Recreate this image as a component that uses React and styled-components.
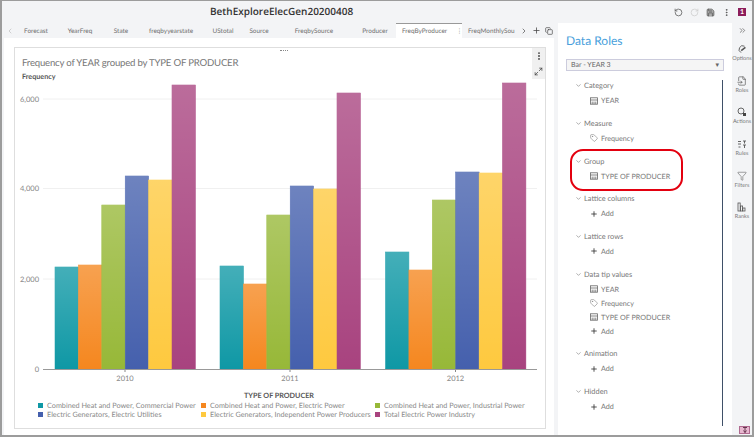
import React from 'react';
import styled, { createGlobalStyle } from 'styled-components';
import { ChevronLeft, ChevronRight, ChevronDown, ChevronsRight, Plus, Copy, RotateCcw, RotateCw, Save, MoreVertical, Maximize2, Tag, FileInput, Filter } from 'lucide-react';

const GlobalStyle = createGlobalStyle`
  html, body { margin: 0; padding: 0; background: #fff; }
  body { font-family: Lato, "Open Sans", sans-serif; color: #6b6b6b; text-rendering: geometricPrecision; }
`;

const Frame = styled.div`
  box-sizing: border-box;
  width: 754px;
  height: 437px;
  border: solid #9c9c9c;
  border-width: 1px 2px 2px 2px;
  background: #f3f4f6;
  display: flex;
  flex-direction: column;
  overflow: hidden;
`;

const Header = styled.header`
  height: 22px;
  flex: none;
  position: relative;
  display: flex;
  align-items: center;
  justify-content: flex-end;
  padding-right: 6px;
  gap: 7px;
  color: #555;
`;

const DocTitle = styled.div`
  position: absolute;
  left: 208px;
  top: 3px;
  font: 600 10px/14px "Open Sans", sans-serif;
  color: #333;
`;

const Badge = styled.span`
  width: 8px;
  height: 8px;
  background: #8c1d5b;
  color: #fff;
  font: 700 7px/8px Lato, sans-serif;
  text-align: center;
`;

const Body = styled.div`
  flex: 1;
  display: flex;
  min-height: 0;
`;

const Workspace = styled.div`
  width: 556px;
  flex: none;
  display: flex;
  flex-direction: column;
`;

const TabBar = styled.div`
  height: 15px;
  flex: none;
  display: flex;
  align-items: stretch;
  padding-left: 4px;
  font-size: 6.4px;
  color: #6e6e6e;
`;

const TabArrow = styled.span`
  display: flex;
  align-items: center;
  justify-content: flex-end;
  width: 8px;
  color: #bbb;
`;

const Tab = styled.div`
  display: flex;
  align-items: center;
  justify-content: center;
  flex: none;
  width: ${p => p.$w}px;
  white-space: nowrap;
  box-sizing: border-box;
  background: ${p => p.$active ? '#fff' : 'transparent'};
  border-top: ${p => p.$active ? '1px solid #999' : '1px solid transparent'};
  ${p => p.$active && 'justify-content: flex-start; padding-left: 6px; gap: 9px;'}
  ${p => p.$trailing && 'justify-content: flex-start; margin-left: 6px;'}
`;

const TabTools = styled.div`
  display: flex;
  align-items: center;
  gap: 4px;
  color: #444;
`;

const Canvas = styled.div`
  flex: 1;
  background: #fff;
  margin: 0 4px 0 2px;
  padding: 9px 8px 6px 10px;
  display: flex;
  min-height: 0;
`;

const Card = styled.section`
  flex: 1;
  box-sizing: border-box;
  border: 1px solid #dedede;
  position: relative;
  padding: 9px 0 0 7px;
  display: flex;
  flex-direction: column;
`;

const Grip = styled.span`
  position: absolute;
  top: 2px;
  left: 50%;
  width: 8px;
  border-top: 1px dotted #888;
`;

const CardTools = styled.div`
  position: absolute;
  right: 0;
  top: 0;
  width: 13px;
  height: 31px;
  background: #f0f0f0;
  display: flex;
  flex-direction: column;
  align-items: center;
  justify-content: space-around;
  color: #444;
`;

const ChartTitle = styled.div`
  font-size: 9.6px;
  letter-spacing: -0.2px;
  line-height: 13px;
  color: #777;
`;

const AxisTitle = styled.div`
  font-size: 7.2px;
  line-height: 10px;
  margin-top: 2px;
  font-weight: 700;
  color: #555;
`;

const Plot = styled.svg`
  display: block;
  margin-left: -7px;
  width: 530px;
  height: 309px;
  flex: none;
`;

const LegendTitle = styled.div`
  text-align: center;
  font-size: 7.2px;
  font-weight: 700;
  line-height: 10px;
  color: #555;
  padding-right: 9px;
`;

const Legend = styled.div`
  display: grid;
  grid-template-columns: 163px 174px auto;
  margin: 0 0 0 16px;
  font-size: 7.25px;
  line-height: 9px;
  color: #888;
`;

const LegendItem = styled.div`
  display: flex;
  align-items: center;
  gap: 4px;
  white-space: nowrap;
`;

const Swatch = styled.i`
  width: 5px;
  height: 5px;
  background: ${p => p.$c};
`;

const RolesPanel = styled.aside`
  width: 174px;
  flex: none;
  background: #fff;
  box-sizing: border-box;
  padding: 11px 8px 0 8px;
  position: relative;
`;

const PanelTitle = styled.h2`
  margin: 0;
  font-size: 12px;
  line-height: 14px;
  font-weight: 400;
  color: #4a9fdc;
`;

const Select = styled.div`
  margin-top: 11px;
  height: 12px;
  width: 158px;
  box-sizing: border-box;
  border: 1px solid #ccd;
  background: #f5f5f5;
  padding: 0 4px;
  font-size: 7px;
  line-height: 10px;
  display: flex;
  justify-content: space-between;
  color: #666;
`;

const Roles = styled.div`
  margin-top: 7px;
  display: flex;
  flex-direction: column;
  gap: 8px;
`;

const Section = styled.div`
  position: relative;
  ${p => p.$marked && `
    &::after {
      content: '';
      position: absolute;
      left: 4px;
      top: -4px;
      width: 113px;
      height: 42px;
      box-sizing: border-box;
      border: 2px solid #e3000f;
      border-radius: 13px;
    }
  `}
`;

const SectionHead = styled.div`
  display: flex;
  align-items: center;
  height: 15.7px;
  gap: 2px;
  padding-left: 9px;
  font-size: 7.4px;
  color: #777;
`;

const RoleRow = styled.div`
  display: flex;
  align-items: center;
  height: 14px;
  gap: 3px;
  padding-left: 24px;
  font-size: 7.2px;
  color: #777;
`;

const ScrollThumb = styled.div`
  position: absolute;
  right: 9px;
  top: 57px;
  bottom: 9px;
  width: 1px;
  background: #3f5068;
`;

const Rail = styled.nav`
  flex: 1;
  display: flex;
  flex-direction: column;
  align-items: center;
  position: relative;
  padding-top: 1px;
`;

const RailToggle = styled.div`
  height: 12px;
  display: flex;
  align-items: center;
  margin-bottom: 2px;
`;

const RailItem = styled.div`
  width: 100%;
  height: 31.6px;
  display: flex;
  flex-direction: column;
  align-items: center;
  justify-content: center;
  gap: 2px;
  font-size: 5.5px;
  line-height: 7px;
  color: #777;
`;

const PinButton = styled.span`
  position: absolute;
  right: 2px;
  bottom: 1px;
  width: 11px;
  height: 8px;
  background: #e8b8d0;
  border: 1px solid #b06a90;
  box-sizing: border-box;
  display: flex;
  align-items: center;
  justify-content: center;
`;

const tabs = [
  ['Forecast', 44], ['YearFreq', 44], ['State', 38], ['freqbyyearstate', 62],
  ['UStotal', 42], ['Source', 30], ['FreqbySource', 80], ['Producer', 42],
];

const colors = ['#0f98a5', '#f5871f', '#97b838', '#4560ad', '#fec93f', '#a8437f'];
const groups = [
  { label: '2010', x: 55, tops: [268, 266, 206, 177, 181, 86] },
  { label: '2011', x: 220, tops: [267, 285, 216, 187, 190, 94] },
  { label: '2012', x: 385.5, tops: [253, 271, 201, 173, 174, 84] },
];
const ticks = [['6,000', 100], ['4,000', 189.5], ['2,000', 280], ['0', 370]];

const legend = [
  ['Combined Heat and Power, Commercial Power', colors[0]],
  ['Combined Heat and Power, Electric Power', colors[1]],
  ['Combined Heat and Power, Industrial Power', colors[2]],
  ['Electric Generators, Electric Utilities', colors[3]],
  ['Electric Generators, Independent Power Producers', colors[4]],
  ['Total Electric Power Industry', colors[5]],
];

const sections = [
  { name: 'Category', rows: [['cat', 'YEAR']] },
  { name: 'Measure', rows: [['tag', 'Frequency']] },
  { name: 'Group', marked: true, rows: [['cat', 'TYPE OF PRODUCER']] },
  { name: 'Lattice columns', rows: [['add', 'Add']] },
  { name: 'Lattice rows', rows: [['add', 'Add']] },
  { name: 'Data tip values', rows: [['cat', 'YEAR'], ['tag', 'Frequency'], ['cat', 'TYPE OF PRODUCER'], ['add', 'Add']] },
  { name: 'Animation', rows: [['add', 'Add']] },
  { name: 'Hidden', rows: [['add', 'Add']] },
];

function OptionsIcon() {
  return (
    <svg width="10" height="10" viewBox="0 0 10 10" fill="none" stroke="#555" strokeWidth="0.9">
      <path d="M7.5 2.2A3.6 3.6 0 1 0 4 8.6" />
      <path d="M4.2 6.6L8.4 3.4" strokeWidth="1.6" />
    </svg>
  );
}

function ActionsIcon() {
  return (
    <svg width="10" height="10" viewBox="0 0 10 10" fill="none" stroke="#555" strokeWidth="0.9">
      <circle cx="4" cy="4" r="3" />
      <rect x="6" y="6" width="3" height="3" fill="#444" stroke="none" />
    </svg>
  );
}

function RulesIcon() {
  return (
    <svg width="10" height="10" viewBox="0 0 10 10" fill="none" stroke="#555" strokeWidth="0.9">
      <path d="M1 2.5H4M1 5H4M1.5 8H3.5M6 2H9M7.5 2V4.5M6 6H9M7.5 6V9" />
    </svg>
  );
}

function RanksIcon() {
  return (
    <svg width="10" height="10" viewBox="0 0 10 10" fill="none" stroke="#555" strokeWidth="0.8">
      <rect x="1" y="1" width="2.2" height="8" />
      <rect x="3.4" y="4" width="2.2" height="5" />
      <rect x="5.8" y="6" width="2.2" height="3" />
    </svg>
  );
}

const railItems = [
  ['Options', OptionsIcon],
  ['Roles', () => <FileInput size={10} strokeWidth={1.6} color="#555" />],
  ['Actions', ActionsIcon],
  ['Rules', RulesIcon],
  ['Filters', () => <Filter size={10} strokeWidth={1.3} color="#555" />],
  ['Ranks', RanksIcon],
];

function CategoryIcon() {
  return (
    <svg width="8" height="8" viewBox="0 0 8 8" fill="none" stroke="#666" strokeWidth="0.8">
      <rect x="0.5" y="0.8" width="7" height="6.4" />
      <path d="M0.5 3H7.5M2.2 7V4.6M4 7V4.6M5.8 7V4.6" />
    </svg>
  );
}

function RoleIcon({ kind }) {
  if (kind === 'cat') return <CategoryIcon />;
  if (kind === 'tag') return <Tag size={8} strokeWidth={1.5} color="#666" />;
  return <Plus size={8} strokeWidth={2.5} color="#333" />;
}

function Chart() {
  // the svg starts at the card's left edge, x 15 / y 83 of the page
  return (
    <Plot viewBox="15 83 530 309">
      <defs>
        <linearGradient id="fade" x1="0" y1="0" x2="0" y2="1">
          <stop offset="0" stopColor="#fff" stopOpacity="0.22" />
          <stop offset="1" stopColor="#fff" stopOpacity="0" />
        </linearGradient>
      </defs>
      {ticks.map(([t, y]) => (
        <g key={t}>
          {y !== 370 && <line x1="43" x2="537" y1={y} y2={y} stroke="#f0f0f0" />}
          <text x="39" y={y + 2.5} textAnchor="end" fontSize="7.5" fill="#888" fontFamily="Lato">{t}</text>
        </g>
      ))}
      {groups.map(g => (
        <g key={g.label}>
          {g.tops.map((top, i) => (
            <g key={i}>
              <rect x={g.x + i * 23.4} y={top} width="23.4" height={370 - top} fill={colors[i]} stroke={colors[i]} strokeWidth="0.5" />
              <rect x={g.x + i * 23.4} y={top} width="23.4" height={370 - top} fill="url(#fade)" />
            </g>
          ))}
          <line x1={g.x + 70} x2={g.x + 70} y1="370" y2="373" stroke="#888" />
          <text x={g.x + 70} y="381.5" textAnchor="middle" fontSize="7.5" fill="#888" fontFamily="Lato">{g.label}</text>
        </g>
      ))}
      <line x1="43" x2="537" y1="370.5" y2="370.5" stroke="#999" />
    </Plot>
  );
}

export default function App() {
  return (
    <>
      <GlobalStyle />
      <Frame>
        <Header>
          <DocTitle>BethExploreElecGen20200408</DocTitle>
          <RotateCcw size={9} />
          <RotateCw size={9} color="#ccc" />
          <Save size={9} fill="#aaa" />
          <MoreVertical size={9} strokeWidth={2.5} />
          <Badge>1</Badge>
        </Header>
        <Body>
          <Workspace>
            <TabBar>
              <TabArrow><ChevronLeft size={8} /></TabArrow>
              {tabs.map(([name, w]) => <Tab key={name} $w={w}>{name}</Tab>)}
              <Tab $w={66} $active>FreqByProducer<span>⋮</span></Tab>
              <Tab $w={52} $trailing>FreqMonthlySou</Tab>
              <TabTools>
                <ChevronRight size={8} />
                <Plus size={9} />
                <Copy size={8} />
              </TabTools>
            </TabBar>
            <Canvas>
              <Card>
                <Grip />
                <CardTools>
                  <MoreVertical size={10} strokeWidth={2.5} />
                  <Maximize2 size={9} />
                </CardTools>
                <ChartTitle>Frequency of YEAR grouped by TYPE OF PRODUCER</ChartTitle>
                <AxisTitle>Frequency</AxisTitle>
                <Chart />
                <LegendTitle>TYPE OF PRODUCER</LegendTitle>
                <Legend>
                  {legend.map(([label, c]) => (
                    <LegendItem key={label}><Swatch $c={c} />{label}</LegendItem>
                  ))}
                </Legend>
              </Card>
            </Canvas>
          </Workspace>
          <RolesPanel>
            <PanelTitle>Data Roles</PanelTitle>
            <Select>Bar - YEAR 3<span>▾</span></Select>
            <Roles>
              {sections.map(s => (
                <Section key={s.name} $marked={s.marked}>
                  <SectionHead><ChevronDown size={7} />{s.name}</SectionHead>
                  {s.rows.map(([kind, text], i) => (
                    <RoleRow key={i}><RoleIcon kind={kind} />{text}</RoleRow>
                  ))}
                </Section>
              ))}
            </Roles>
            <ScrollThumb />
          </RolesPanel>
          <Rail>
            <RailToggle><ChevronsRight size={9} color="#666" /></RailToggle>
            {railItems.map(([label, Icon]) => (
              <RailItem key={label}><Icon />{label}</RailItem>
            ))}
            <PinButton>
              <svg width="6" height="6" viewBox="0 0 6 6" fill="none" stroke="#5a2a44" strokeWidth="0.9">
                <path d="M1 0.5H5M3 0.5V5.5M1.5 3.5L3 5.5L4.5 3.5" />
              </svg>
            </PinButton>
          </Rail>
        </Body>
      </Frame>
    </>
  );
}
